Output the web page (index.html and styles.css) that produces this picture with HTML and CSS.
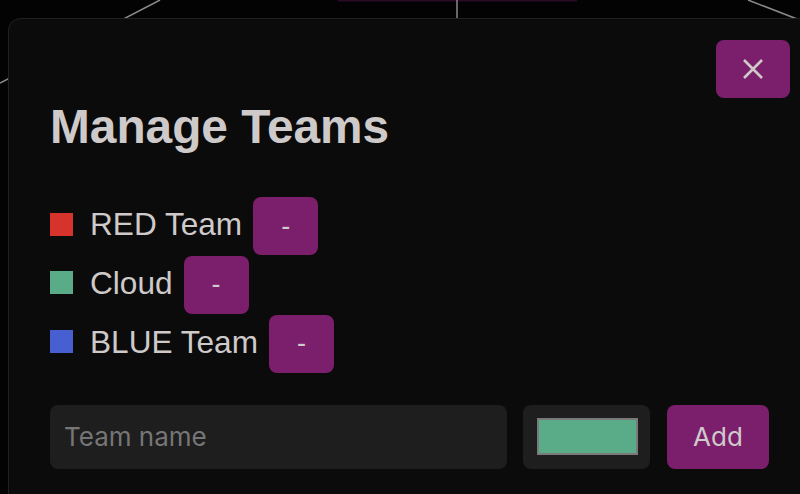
FILE: index.html
```html
<!DOCTYPE html>
<html lang="en">
<head>
<meta charset="utf-8">
<title>Manage Teams</title>
<link rel="stylesheet" href="styles.css">
</head>
<body>
<svg class="graph" width="800" height="494" viewBox="0 0 800 494" aria-hidden="true">
  <rect x="338" y="0" width="239" height="1.5" fill="#2b0a26"/>
  <line x1="0" y1="83" x2="160" y2="0" stroke="#8a8a8a" stroke-width="1.5"/>
  <line x1="457" y1="0" x2="457" y2="40" stroke="#8a8a8a" stroke-width="1.5"/>
  <line x1="748" y1="0" x2="810" y2="24" stroke="#8a8a8a" stroke-width="1.5"/>
</svg>
<div class="modal">
  <button class="close" type="button" aria-label="Close">
    <svg width="20" height="20" viewBox="0 0 20 20"><path d="M1 1 L19 19 M19 1 L1 19" stroke="#cfcaca" stroke-width="2.6" fill="none"/></svg>
  </button>
  <h2 class="title">Manage Teams</h2>
  <ul class="teams">
    <li class="team"><span class="swatch" style="background:#d6332d"></span><span class="name">RED Team</span><button class="btn remove" type="button">-</button></li>
    <li class="team"><span class="swatch" style="background:#5aab88"></span><span class="name">Cloud</span><button class="btn remove" type="button">-</button></li>
    <li class="team"><span class="swatch" style="background:#485fd2"></span><span class="name">BLUE Team</span><button class="btn remove" type="button">-</button></li>
  </ul>
  <form class="add-form">
    <input class="team-input" type="text" placeholder="Team name">
    <div class="color-wrap"><span class="color-swatch"></span></div>
    <button class="btn add" type="button">Add</button>
  </form>
</div>
</body>
</html>
```
FILE: styles.css
```css
html, body {
  margin: 0;
  padding: 0;
  background: #030303;
  width: 800px;
  height: 494px;
  overflow: hidden;
}
body {
  padding: 18px 0 0 8px;
  box-sizing: border-box;
  font-family: "Liberation Sans", Arial, sans-serif;
  color: #cfcaca;
}
.graph {
  position: absolute;
  left: 0;
  top: 0;
}
.modal {
  position: relative;
  width: 802px;
  height: 476px;
  box-sizing: border-box;
  background: #0b0b0b;
  border: 1px solid #202020;
  border-bottom: none;
  border-radius: 13px 13px 0 0;
  padding: 81px 0 0 41px;
}
.close {
  position: absolute;
  top: 21px;
  right: 19px;
  width: 74px;
  height: 58px;
  border: none;
  border-radius: 8px;
  background: #7b1e6b;
  display: flex;
  align-items: center;
  justify-content: center;
  padding: 0;
}
.title {
  margin: 0;
  font-size: 47.8px;
  font-weight: bold;
  line-height: 53.5px;
  color: #cfcaca;
}
.teams {
  list-style: none;
  margin: 43.5px 0 0 0;
  padding: 0;
}
.team {
  display: flex;
  align-items: center;
  height: 58.67px;
}
.swatch {
  width: 23px;
  height: 23px;
  margin: 0 17px 4px 0;
}
.name {
  font-size: 31.6px;
  line-height: 36px;
  margin: 0 11px 4px 0;
}
.btn {
  border: none;
  background: #7b1e6b;
  color: #cfcaca;
  border-radius: 8px;
  padding: 0;
}
.remove {
  width: 65px;
  height: 58px;
  font-family: "Liberation Sans", Arial, sans-serif;
  font-size: 27px;
}
.add-form {
  display: flex;
  gap: 16px;
  margin-top: 32px;
  height: 64px;
}
.team-input {
  width: 457px;
  height: 64px;
  box-sizing: border-box;
  border: none;
  border-radius: 8px;
  background: #1e1e1e;
  padding: 0 14px;
  font-family: Inter, sans-serif;
  font-size: 26px;
  color: #cfcaca;
  outline: none;
}
.team-input::placeholder {
  color: #767676;
}
.color-wrap {
  width: 127px;
  height: 64px;
  box-sizing: border-box;
  background: #1e1e1e;
  border-radius: 8px;
  padding: 13px 12px 14px 14px;
}
.color-swatch {
  display: block;
  width: 101px;
  height: 37px;
  box-sizing: border-box;
  border: 2px solid #7a7a7a;
  background: #5aab88;
}
.add {
  width: 102px;
  height: 64px;
  margin-left: 1px;
  font-family: Inter, sans-serif;
  font-size: 26px;
}
```
